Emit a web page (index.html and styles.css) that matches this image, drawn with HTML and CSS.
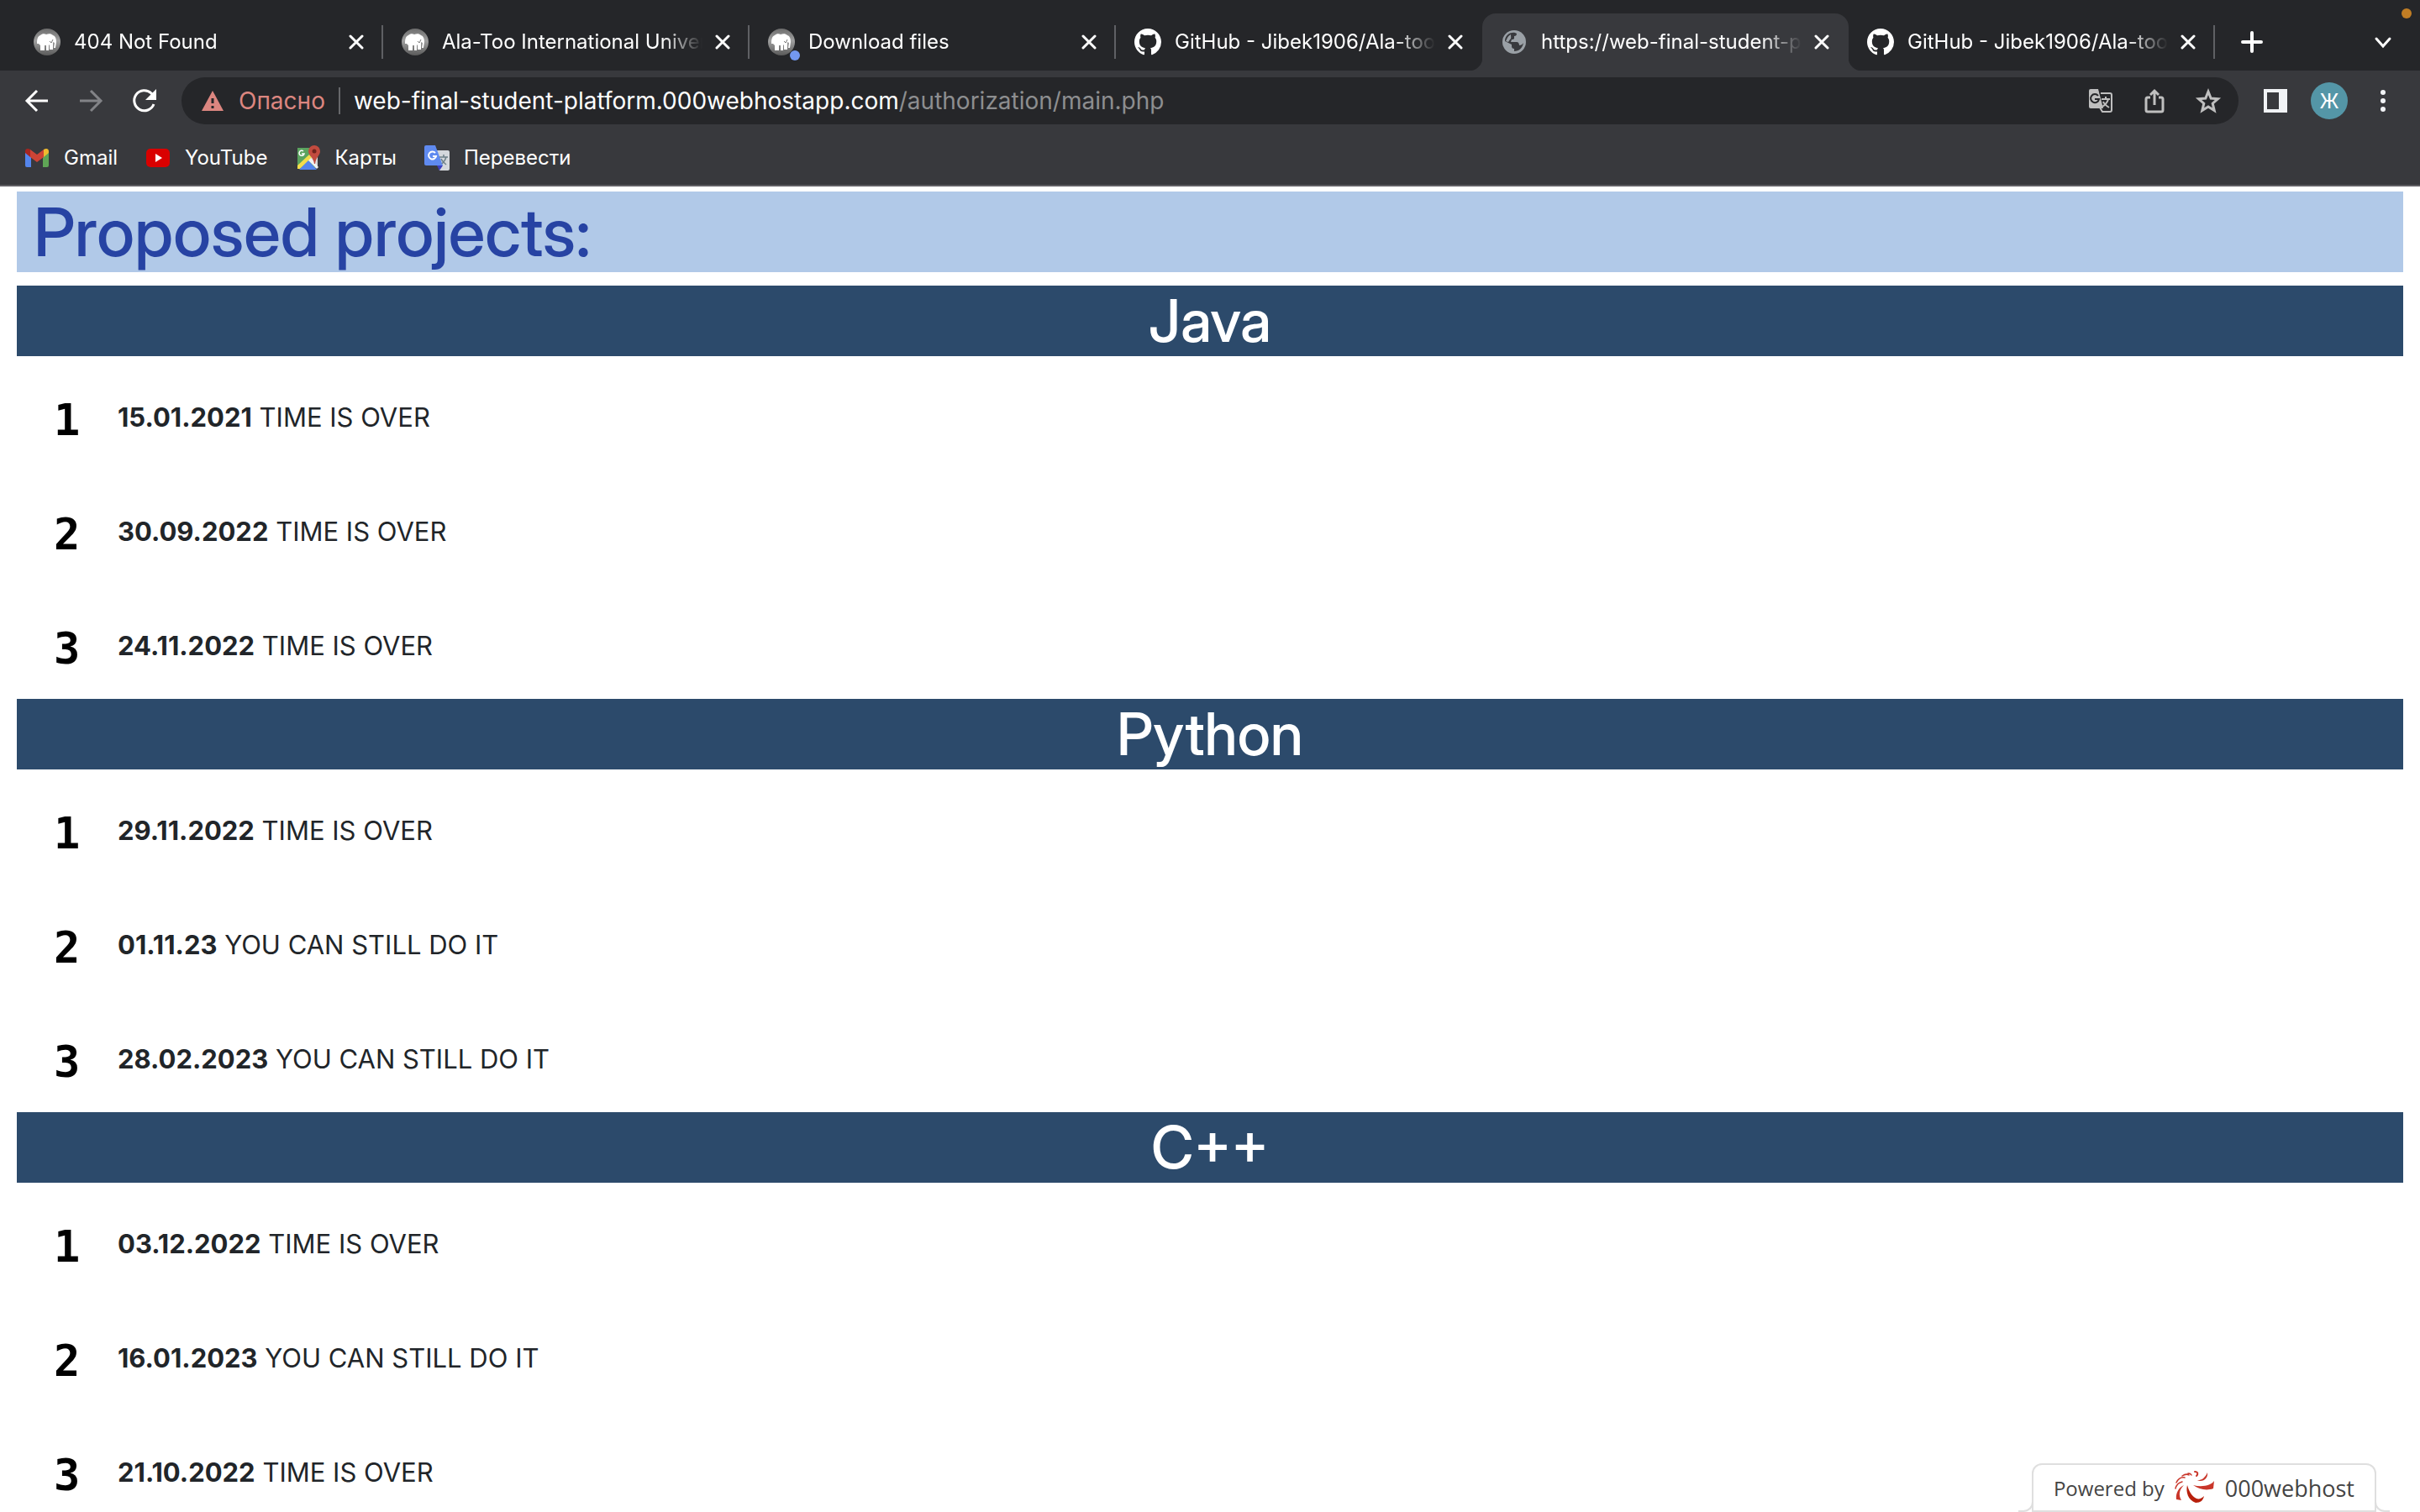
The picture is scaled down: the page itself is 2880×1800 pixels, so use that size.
FILE: index.html
```html
<!DOCTYPE html>
<html lang="en">
<head>
<meta charset="utf-8">
<title>Proposed projects</title>
<link rel="stylesheet" href="styles.css">
</head>
<body>
<svg class="sprite" aria-hidden="true">
  <defs>
    <linearGradient id="silver" x1="0" y1="0" x2="0" y2="1"><stop offset="0" stop-color="#6c6c6c"/><stop offset=".45" stop-color="#a0a0a0"/><stop offset="1" stop-color="#5a5a5a"/></linearGradient>
    <symbol id="mamp" viewBox="0 0 32 32"><circle cx="16" cy="16" r="16" fill="url(#silver)"/><path fill="#fff" d="M4 18c0-6 1-9 4-10 2-2 5-2 7-1 3-1 6-1 8 1 3 1 4 4 4 8l-1 7h-2l1-6-2-1v9h-4v-6l-1 1v6h-3v-6h-2v6H8v-6l-2-2z"/><path d="M19 15l2 2 2-4" fill="none" stroke="#777"/></symbol>
    <symbol id="octo" viewBox="0 0 16 16"><path fill="#fff" d="M8 0C3.58 0 0 3.58 0 8c0 3.54 2.29 6.53 5.47 7.59.4.07.55-.17.55-.38 0-.19-.01-.82-.01-1.49-2.01.37-2.53-.49-2.69-.94-.09-.23-.48-.94-.82-1.13-.28-.15-.68-.52-.01-.53.63-.01 1.08.58 1.23.82.72 1.21 1.87.87 2.33.66.07-.52.28-.87.51-1.07-1.78-.2-3.64-.89-3.64-3.95 0-.87.31-1.59.82-2.15-.08-.2-.36-1.02.08-2.12 0 0 .67-.21 2.2.82.64-.18 1.32-.27 2-.27s1.36.09 2 .27c1.53-1.04 2.2-.82 2.2-.82.44 1.1.16 1.92.08 2.12.51.56.82 1.27.82 2.15 0 3.07-1.87 3.75-3.65 3.95.29.25.54.73.54 1.48 0 1.07-.01 1.93-.01 2.2 0 .21.15.46.55.38A8.01 8.01 0 0016 8c0-4.42-3.58-8-8-8z"/></symbol>
    <symbol id="cross" viewBox="0 0 18 18"><path d="M2 2l14 14M16 2L2 16" stroke="#fff" stroke-width="3" stroke-linecap="round"/></symbol>
  </defs>
</svg>

<header class="browser">
  <nav class="tabs" aria-label="Tabs">
    <div class="tab"><svg class="favicon"><use href="#mamp"/></svg><span class="tab-title">404 Not Found</span><button class="close" aria-label="Close tab"><svg><use href="#cross"/></svg></button></div>
    <div class="tab"><svg class="favicon"><use href="#mamp"/></svg><span class="tab-title">Ala-Too International University</span><button class="close" aria-label="Close tab"><svg><use href="#cross"/></svg></button></div>
    <div class="tab notified"><svg class="favicon"><use href="#mamp"/></svg><span class="tab-title">Download files</span><button class="close" aria-label="Close tab"><svg><use href="#cross"/></svg></button></div>
    <div class="tab before-active"><svg class="favicon"><use href="#octo"/></svg><span class="tab-title">GitHub - Jibek1906/Ala-too</span><button class="close" aria-label="Close tab"><svg><use href="#cross"/></svg></button></div>
    <div class="tab active"><svg class="favicon" viewBox="0 0 32 32"><circle cx="16" cy="16" r="14" fill="#9aa0a6"/><path fill="#38393d" d="M17 5l2 1c0 2-1 3-3 3v3c-1 1-2 1-3 1l-1 3h7c2 0 3 2 3 4 2 0 4-1 5-3-1 6-5 10-11 10v-3c-2 0-3-1-3-3v-2l-8-4C5 9 10 4 17 5z"/><path fill="#9aa0a6" d="M7 13c1-3 3-5 5-6 0 3 1 5-1 6l-2 3-3-1z"/></svg><span class="tab-title">https://web-final-student-p</span><button class="close" aria-label="Close tab"><svg><use href="#cross"/></svg></button></div>
    <div class="tab"><svg class="favicon"><use href="#octo"/></svg><span class="tab-title">GitHub - Jibek1906/Ala-too</span><button class="close" aria-label="Close tab"><svg><use href="#cross"/></svg></button></div>
    <button class="icon-button new-tab" aria-label="New tab"><svg viewBox="0 0 32 32"><path d="M16 5v22M5 16h22" stroke="#fff" stroke-width="4" stroke-linecap="round"/></svg></button>
    <button class="icon-button tab-search" aria-label="Search tabs"><svg viewBox="0 0 32 32"><path d="M8 12l8 9 8-9" fill="none" stroke="#fff" stroke-width="3" stroke-linecap="round"/></svg></button>
    <span class="mic-dot"></span>
  </nav>

  <div class="toolbar">
    <button class="icon-button" aria-label="Back"><svg viewBox="0 0 32 32"><path d="M29 16H5M16 4L4 16l12 12" fill="none" stroke="#fff" stroke-width="3"/></svg></button>
    <button class="icon-button" aria-label="Forward"><svg viewBox="0 0 32 32"><path d="M3 16h24M16 4l12 12-12 12" fill="none" stroke="#828387" stroke-width="3"/></svg></button>
    <button class="icon-button" aria-label="Reload"><svg viewBox="0 0 32 32"><path d="M27 20A12 12 0 1 1 24 7l3 3" fill="none" stroke="#fff" stroke-width="3"/><path d="M30 2v13H17z" fill="#fff"/></svg></button>
    <div class="omnibox">
      <svg class="warning" viewBox="0 0 26 24"><path d="M13 0l13 24H0z" fill="#dc8680"/><path d="M13 9v6M13 18v3" stroke="#252629" stroke-width="3"/></svg>
      <span class="danger">Опасно</span>
      <label class="host" for="path">web-final-student-platform.000webhostapp.com</label>
      <input class="path" id="path" type="text" value="/authorization/main.php">
      <button class="icon-button" aria-label="Translate this page"><svg viewBox="0 0 32 32"><path d="M16 7h11a2 2 0 0 1 2 2v18a2 2 0 0 1-2 2h-9l-3-5" fill="none" stroke="#bfbfbf" stroke-width="2"/><path d="M4 2h9l6 23H4a2 2 0 0 1-2-2V4a2 2 0 0 1 2-2z" fill="#bfbfbf"/><path d="M13 10a5 5 0 1 0 1 4H9" fill="none" stroke="#252629" stroke-width="2"/><path d="M17 14h10M22 11v3M25 14c-1 4-4 7-7 9M19 17c1 3 4 5 7 7" fill="none" stroke="#bfbfbf" stroke-width="2"/></svg></button>
      <button class="icon-button" aria-label="Share"><svg viewBox="0 0 32 32"><path d="M11 12H8a2 2 0 0 0-2 2v13a2 2 0 0 0 2 2h16a2 2 0 0 0 2-2V14a2 2 0 0 0-2-2h-3M16 21V4M11 9l5-5 5 5" fill="none" stroke="#bfbfbf" stroke-width="3"/></svg></button>
      <button class="icon-button" aria-label="Bookmark this page"><svg viewBox="0 0 32 32"><path d="M16 5l3.200 8 8.300.7-6.300 5.500 2 8.300L16 23l-7.200 4.500 2-8.300-6.300-5.500 8.300-.7z" fill="none" stroke="#bfbfbf" stroke-width="3"/></svg></button>
    </div>
    <button class="icon-button" aria-label="Side panel"><svg viewBox="0 0 32 32"><path d="M2 2h28v28H2zM6 6v20h14V6z" fill="#f1f3f6" fill-rule="evenodd"/></svg></button>
    <button class="avatar" aria-label="Profile">Ж</button>
    <button class="icon-button" aria-label="Menu"><svg viewBox="0 0 32 32" fill="#f1f3f6"><circle cx="16" cy="6" r="3"/><circle cx="16" cy="16" r="3"/><circle cx="16" cy="26" r="3"/></svg></button>
  </div>

  <nav class="bookmarks" aria-label="Bookmarks">
    <a href="#"><svg viewBox="0 0 32 32"><path fill="#5485ec" d="M2 9l7 5v13H4a2 2 0 0 1-2-2z"/><path fill="#5fa556" d="M30 9l-7 5v13h5a2 2 0 0 0 2-2z"/><path fill="#cd4436" d="M8 6l8 6 8-6v9l-8 6-8-6z"/><path fill="#a52520" d="M2 10V8c0-3 3-4 6-2v9z"/><path fill="#efbb2f" d="M30 10V8c0-3-3-4-6-2v9z"/></svg>Gmail</a>
    <a href="#"><svg viewBox="0 0 32 32"><rect x="2" y="5" width="28" height="22" rx="5" fill="#d90000"/><path d="M13 11l8 5-8 5z" fill="#fff"/></svg>YouTube</a>
    <a href="#"><svg viewBox="0 0 32 32"><path fill="#5ba35f" d="M4 4h22v24H4z"/><path fill="#d8d8d8" d="M19 15l9-6v17a2 2 0 0 1-2 2z"/><path fill="#f3dd4b" d="M4 25l14-13 3 4L7 29H4z"/><path fill="#5485ec" d="M6 30l11-11 10 11z"/><path fill="#f1f1f1" d="M17 19l3-3 9 11-2 2z"/><path d="M11 8a3 3 0 1 0 1 3h-3" fill="none" stroke="#fff" stroke-width="1.500"/><path fill="#c24b3f" d="M24 1a7 7 0 0 1 7 7c0 5-5 7-6 15h-1c-1-8-7-10-7-15a7 7 0 0 1 7-7z"/><circle cx="24" cy="8" r="2.500" fill="#6e231c"/></svg>Карты</a>
    <a href="#"><svg viewBox="0 0 32 32"><path fill="#d4d7dc" d="M13 7h16a2 2 0 0 1 2 2v20a2 2 0 0 1-2 2H19z"/><path fill="#3c3fc0" d="M16 25h7l-4 6z"/><path fill="#5f8af0" d="M3 1h11l9 24H3a2 2 0 0 1-2-2V3a2 2 0 0 1 2-2z"/><path d="M14 10a4.500 4.500 0 1 0 1 4h-4" fill="none" stroke="#fff" stroke-width="2"/><path d="M19 15h10M24 12v3M27 15c-1 4-3 6-5 8M21 17c1 3 4 5 6 7" fill="none" stroke="#6c7f88" stroke-width="1.500"/></svg>Перевести</a>
  </nav>
</header>

<main class="page">
  <h1 class="page-title">Proposed projects:</h1>
  <section>
    <h2 class="topic">Java</h2>
    <ol class="projects">
      <li><span class="number">1</span><p><b>15.01.2021</b> TIME IS OVER</p></li>
      <li><span class="number">2</span><p><b>30.09.2022</b> TIME IS OVER</p></li>
      <li><span class="number">3</span><p><b>24.11.2022</b> TIME IS OVER</p></li>
    </ol>
  </section>
  <section>
    <h2 class="topic">Python</h2>
    <ol class="projects">
      <li><span class="number">1</span><p><b>29.11.2022</b> TIME IS OVER</p></li>
      <li><span class="number">2</span><p><b>01.11.23</b> YOU CAN STILL DO IT</p></li>
      <li><span class="number">3</span><p><b>28.02.2023</b> YOU CAN STILL DO IT</p></li>
    </ol>
  </section>
  <section>
    <h2 class="topic">C++</h2>
    <ol class="projects">
      <li><span class="number">1</span><p><b>03.12.2022</b> TIME IS OVER</p></li>
      <li><span class="number">2</span><p><b>16.01.2023</b> YOU CAN STILL DO IT</p></li>
      <li><span class="number">3</span><p><b>21.10.2022</b> TIME IS OVER</p></li>
    </ol>
  </section>
</main>

<a class="powered" href="#">Powered by
  <svg viewBox="0 0 48 40" fill="none" stroke="#c9362a" stroke-linecap="round"><path d="M15 17c-2 8 1 18 10 21 6 0 9-3 10-8-3 3-6 4-9 3-6-3-9-9-11-16z" fill="#b8200c" stroke="none"/><path d="M22 17c7 5 16 7 24 4l1-9c-3 5-14 8-25 5z" fill="#c9362a" stroke="none"/><path d="M26 11c5 1 10-2 13-9 1 7-5 12-13 9z" fill="#c9362a" stroke="none"/><path d="M24 1c4 0 4 3 2 5" stroke-width="2"/><path d="M11 17C5 20 1 26 2 34l6 1c-4-7-2-13 3-18z" fill="#c9362a" stroke="none"/><path d="M9 13c-4 1-7 4-8 8M12 8c-5-1-8 2-10 6M17 5c-3-2-5-1-8 1M20 5c-1-2-2-2-4-2" stroke-width="1.500"/></svg>
  <span class="brand">000webhost</span></a>
</body>
</html>
```
FILE: styles.css
```css
* { box-sizing: border-box; }
body {
  margin: 0;
  height: 100vh;
  display: flex;
  flex-direction: column;
  background: #fff;
  color: #212529;
  font-family: Inter, "Liberation Sans", sans-serif;
  font-size: 31px;
}
button { border: 0; padding: 0; background: none; color: inherit; font: inherit; }
svg { display: block; flex: none; }
.sprite { position: absolute; width: 0; height: 0; }

.browser {
  flex: none;
  background: #38393d;
  color: #fff;
  font-size: 24px;
  border-bottom: 2px solid #5f5e63;
}
.tabs {
  display: flex;
  align-items: flex-end;
  height: 84px;
  padding-left: 18px;
  background: #252629;
  position: relative;
}
.tab {
  position: relative;
  display: flex;
  align-items: center;
  flex: 0 1 436px;
  min-width: 0;
  height: 68px;
  padding: 0 22px;
}
.tab:first-child { flex-basis: 438px; }
.tab::after {
  content: "";
  position: absolute;
  right: 0;
  top: 14px;
  width: 2px;
  height: 40px;
  background: #5f6064;
}
.before-active::after { display: none; }
.favicon { width: 32px; height: 32px; margin-right: 16px; }
.tab-title {
  flex: 1;
  overflow: hidden;
  white-space: nowrap;
  line-height: 32px;
  -webkit-mask-image: linear-gradient(to right, #000 calc(100% - 48px), transparent);
  mask-image: linear-gradient(to right, #000 calc(100% - 48px), transparent);
}
.close { margin: 0 1px 0 15px; }
.close svg { width: 18px; height: 18px; }
.notified::before {
  content: "";
  position: absolute;
  left: 48px;
  top: 44px;
  width: 12px;
  height: 12px;
  border-radius: 50%;
  background: #7398f0;
}
.active { background: #38393d; border-radius: 16px 16px 0 0; }
.active::before, .active::after {
  content: "";
  position: absolute;
  top: auto;
  bottom: 0;
  width: 16px;
  height: 16px;
}
.active::before { left: -16px; background: radial-gradient(circle at 0 0, #252629 16px, #38393d 17px); }
.active::after { right: -16px; background: radial-gradient(circle at 100% 0, #252629 16px, #38393d 17px); }

.icon-button { flex: none; width: 32px; height: 32px; }
.icon-button svg { width: 100%; height: 100%; }
.new-tab { margin: 0 0 18px 28px; }
.tab-search { margin: 0 28px 18px auto; }
.mic-dot {
  position: absolute;
  right: 10px;
  top: 10px;
  width: 12px;
  height: 12px;
  border-radius: 50%;
  background: #c17d24;
}

.toolbar { display: flex; align-items: center; gap: 32px; padding: 8px 28px; }
.omnibox {
  flex: 1;
  display: flex;
  align-items: center;
  height: 56px;
  margin: 0 -4px;
  padding: 0 20px 0 24px;
  border-radius: 28px;
  background: #252629;
  font-size: 28px;
}
.warning { width: 26px; height: 24px; }
.danger {
  margin: 0 16px 0 18px;
  padding-right: 16px;
  border-right: 2px solid #66676a;
  line-height: 32px;
  color: #dc8680;
}
.path {
  flex: 1;
  min-width: 0;
  border: 0;
  padding: 0;
  background: none;
  color: #8d8e90;
  font: inherit;
}
.omnibox .icon-button { margin-left: 32px; }
.avatar {
  width: 44px;
  height: 44px;
  margin: 0 -6px;
  border-radius: 50%;
  background: #5496a7;
}

.bookmarks { display: flex; gap: 32px; padding: 14px 28px; }
.bookmarks a { display: flex; align-items: center; gap: 16px; color: #fff; text-decoration: none; line-height: 36px; }
.bookmarks svg { width: 32px; height: 32px; }

.page { flex: 1; min-height: 0; overflow-y: auto; scrollbar-width: none; padding: 6px 20px 0; }
.page-title,
.topic {
  margin: 0;
  font-family: "Inter Display", Roboto, sans-serif;
  font-weight: 500;
}
.page-title {
  margin-bottom: 16px;
  padding-left: 20px;
  background: #b1c9e8;
  color: #2743a3;
  font-size: 80px;
  line-height: 96px;
}
.topic {
  background: #2c4a6b;
  color: #fff;
  font-size: 70px;
  line-height: 84px;
  text-align: center;
}
.projects { margin: 0; padding: 0; list-style: none; }
.projects li { display: flex; align-items: center; height: 136px; padding: 10px 0 0 44px; }
.projects p { margin: 0; line-height: 48px; }
.number {
  width: 76px;
  padding-top: 6px;
  color: #000;
  font: bold 52px/48px "DejaVu Sans Mono", monospace;
}

.powered {
  position: fixed;
  right: 52px;
  bottom: 0;
  display: flex;
  align-items: center;
  gap: 12px;
  height: 58px;
  padding: 0 24px;
  border: 2px solid #dfdfdf;
  border-radius: 12px 12px 0 0;
  background: #fff;
  color: #444;
  font-family: "Open Sans", sans-serif;
  font-size: 24px;
  text-decoration: none;
}
.powered::before, .powered::after {
  content: "";
  position: absolute;
  bottom: -2px;
  width: 16px;
  height: 12px;
  border-bottom: 2px solid #dfdfdf;
}
.powered::before { right: 100%; border-right: 2px solid #dfdfdf; border-bottom-right-radius: 12px; }
.powered::after { left: 100%; border-left: 2px solid #dfdfdf; border-bottom-left-radius: 12px; }
.powered svg { width: 48px; height: 40px; }
.brand { font-size: 27px; }
```
